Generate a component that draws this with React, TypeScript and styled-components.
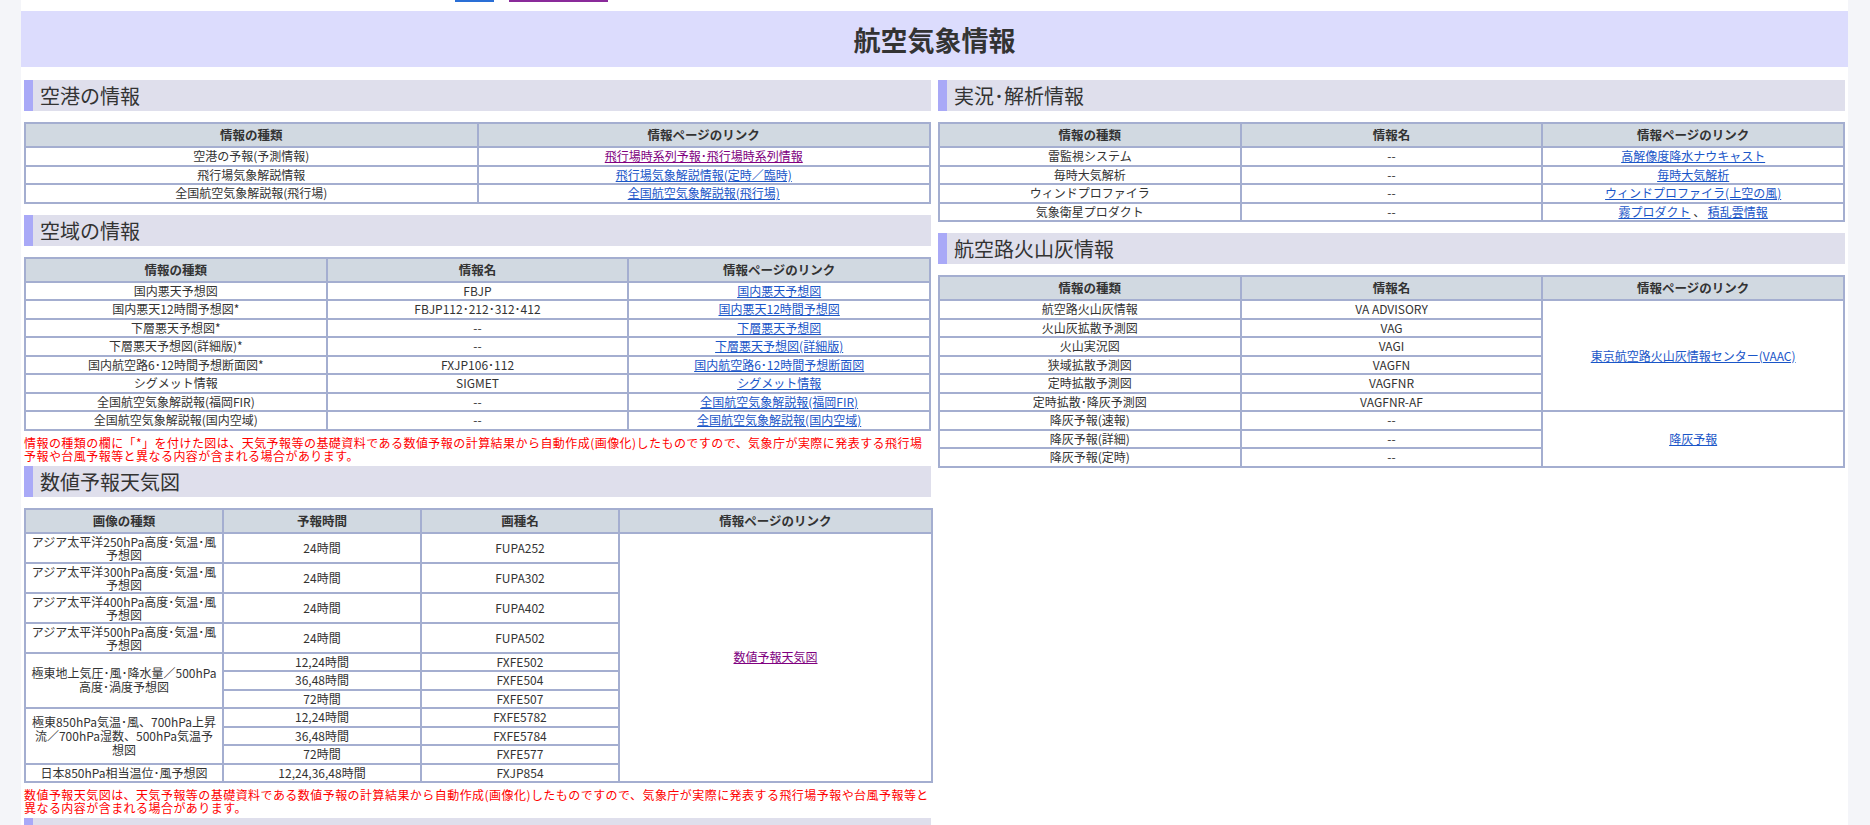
import React from "react";
import styled, { createGlobalStyle } from "styled-components";

const Global = createGlobalStyle`
  html, body { margin: 0; padding: 0; background: #f4f5f9; }
  body { font-family: "Noto Sans CJK JP", "Noto Sans", sans-serif; color: #333; }
`;

const Page = styled.div`
  margin-left: 21px;
  width: 1827px;
  background: #fff;
  min-height: 825px;
`;
const TopStrip = styled.div`
  display: flex;
  height: 11px;
  gap: 15px;
  padding-left: 434px;
`;
const TopBtn = styled.div<{ $c: string; $w: number }>`
  width: ${(p) => p.$w}px;
  height: 2px;
  background: ${(p) => p.$c};
`;
const Banner = styled.h1`
  margin: 0;
  height: 56px;
  background: #dcdcfd;
  display: flex;
  align-items: center;
  justify-content: center;
  font-size: 27px;
  font-weight: bold;
  color: #333;
`;
const Columns = styled.div`
  display: grid;
  grid-template-columns: 907px 907px;
  gap: 7px;
  padding: 0 3px;
  margin-top: 13px;
`;
const Col = styled.div`
  display: flex;
  flex-direction: column;
`;
const Heading = styled.h2`
  margin: 0 0 11px;
  height: 31px;
  box-sizing: border-box;
  background: #dfdfec;
  border-left: 9px solid #a9a9f7;
  padding-left: 7px;
  font-size: 20px;
  font-weight: normal;
  line-height: 31px;
  color: #333;
`;
const Table = styled.table`
  width: 100%;
  border-collapse: collapse;
  border: 2px solid #a4aed0;
  table-layout: fixed;
  font-size: 12px;
  margin-bottom: 11px;
  & th, & td {
    border: 2px solid #a4aed0;
    text-align: center;
    padding: 0 3px;
    line-height: 14px;
  }
  & th {
    background: #d1d9e1;
    height: 22px;
    font-weight: bold;
    font-size: 12.5px;
  }
  & td { height: 16.5px; }
`;
const ColW = styled.col<{ $w: number }>`
  width: ${(p) => p.$w}px;
`;
const TallTd = styled.td`
  height: 28px !important;
  line-height: 13px !important;
`;
const Link = styled.a<{ $v?: boolean }>`
  color: ${(p) => (p.$v ? "#800080" : "#1a56c8")};
  text-decoration: underline;
`;
const Note = styled.p`
  margin: -6px 0 4px;
  color: #f00;
  font-size: 12px;
  line-height: 13px;
  letter-spacing: 0.45px;
`;

const A = ({ t, v }: { t: string; v?: boolean }) => <Link href="#" $v={v}>{t}</Link>;

const sky: [string, string, string][] = [
  ["国内悪天予想図", "FBJP", "国内悪天予想図"],
  ["国内悪天12時間予想図*", "FBJP112･212･312･412", "国内悪天12時間予想図"],
  ["下層悪天予想図*", "--", "下層悪天予想図"],
  ["下層悪天予想図(詳細版)*", "--", "下層悪天予想図(詳細版)"],
  ["国内航空路6･12時間予想断面図*", "FXJP106･112", "国内航空路6･12時間予想断面図"],
  ["シグメット情報", "SIGMET", "シグメット情報"],
  ["全国航空気象解説報(福岡FIR)", "--", "全国航空気象解説報(福岡FIR)"],
  ["全国航空気象解説報(国内空域)", "--", "全国航空気象解説報(国内空域)"],
];

export default function App() {
  return (
    <>
      <Global />
      <Page>
        <TopStrip>
          <TopBtn $c="#2a6fd6" $w={39} />
          <TopBtn $c="#8a2a9a" $w={99} />
        </TopStrip>
        <Banner>航空気象情報</Banner>
        <Columns>
          <Col>
            <Heading>空港の情報</Heading>
            <Table>
              <thead><tr><th>情報の種類</th><th>情報ページのリンク</th></tr></thead>
              <tbody>
                <tr><td>空港の予報(予測情報)</td><td><A v t="飛行場時系列予報･飛行場時系列情報" /></td></tr>
                <tr><td>飛行場気象解説情報</td><td><A t="飛行場気象解説情報(定時／臨時)" /></td></tr>
                <tr><td>全国航空気象解説報(飛行場)</td><td><A t="全国航空気象解説報(飛行場)" /></td></tr>
              </tbody>
            </Table>
            <Heading>空域の情報</Heading>
            <Table>
              <thead><tr><th>情報の種類</th><th>情報名</th><th>情報ページのリンク</th></tr></thead>
              <tbody>
                {sky.map((r) => (
                  <tr key={r[0]}><td>{r[0]}</td><td>{r[1]}</td><td><A t={r[2]} /></td></tr>
                ))}
              </tbody>
            </Table>
            <Note>情報の種類の欄に「*」を付けた図は、天気予報等の基礎資料である数値予報の計算結果から自動作成(画像化)したものですので、気象庁が実際に発表する飛行場予報や台風予報等と異なる内容が含まれる場合があります。</Note>
            <Heading>数値予報天気図</Heading>
            <Table>
              <colgroup><ColW $w={198} /><ColW $w={198} /><ColW $w={198} /><ColW $w={313} /></colgroup>
              <thead><tr><th>画像の種類</th><th>予報時間</th><th>画種名</th><th>情報ページのリンク</th></tr></thead>
              <tbody>
                <tr><TallTd>アジア太平洋250hPa高度･気温･風予想図</TallTd><td>24時間</td><td>FUPA252</td><td rowSpan={11}><A v t="数値予報天気図" /></td></tr>
                <tr><TallTd>アジア太平洋300hPa高度･気温･風予想図</TallTd><td>24時間</td><td>FUPA302</td></tr>
                <tr><TallTd>アジア太平洋400hPa高度･気温･風予想図</TallTd><td>24時間</td><td>FUPA402</td></tr>
                <tr><TallTd>アジア太平洋500hPa高度･気温･風予想図</TallTd><td>24時間</td><td>FUPA502</td></tr>
                <tr><td rowSpan={3}>極東地上気圧･風･降水量／500hPa高度･渦度予想図</td><td>12,24時間</td><td>FXFE502</td></tr>
                <tr><td>36,48時間</td><td>FXFE504</td></tr>
                <tr><td>72時間</td><td>FXFE507</td></tr>
                <tr><td rowSpan={3}>極東850hPa気温･風、700hPa上昇流／700hPa湿数、500hPa気温予想図</td><td>12,24時間</td><td>FXFE5782</td></tr>
                <tr><td>36,48時間</td><td>FXFE5784</td></tr>
                <tr><td>72時間</td><td>FXFE577</td></tr>
                <tr><td>日本850hPa相当温位･風予想図</td><td>12,24,36,48時間</td><td>FXJP854</td></tr>
              </tbody>
            </Table>
            <Note>数値予報天気図は、天気予報等の基礎資料である数値予報の計算結果から自動作成(画像化)したものですので、気象庁が実際に発表する飛行場予報や台風予報等と異なる内容が含まれる場合があります。</Note>
            <Heading>&nbsp;</Heading>
          </Col>
          <Col>
            <Heading>実況･解析情報</Heading>
            <Table>
              <thead><tr><th>情報の種類</th><th>情報名</th><th>情報ページのリンク</th></tr></thead>
              <tbody>
                <tr><td>雷監視システム</td><td>--</td><td><A t="高解像度降水ナウキャスト" /></td></tr>
                <tr><td>毎時大気解析</td><td>--</td><td><A t="毎時大気解析" /></td></tr>
                <tr><td>ウィンドプロファイラ</td><td>--</td><td><A t="ウィンドプロファイラ(上空の風)" /></td></tr>
                <tr><td>気象衛星プロダクト</td><td>--</td><td><A t="霧プロダクト" /> 、 <A t="積乱雲情報" /></td></tr>
              </tbody>
            </Table>
            <Heading>航空路火山灰情報</Heading>
            <Table>
              <thead><tr><th>情報の種類</th><th>情報名</th><th>情報ページのリンク</th></tr></thead>
              <tbody>
                <tr><td>航空路火山灰情報</td><td>VA ADVISORY</td><td rowSpan={6}><A t="東京航空路火山灰情報センター(VAAC)" /></td></tr>
                <tr><td>火山灰拡散予測図</td><td>VAG</td></tr>
                <tr><td>火山実況図</td><td>VAGI</td></tr>
                <tr><td>狭域拡散予測図</td><td>VAGFN</td></tr>
                <tr><td>定時拡散予測図</td><td>VAGFNR</td></tr>
                <tr><td>定時拡散･降灰予測図</td><td>VAGFNR-AF</td></tr>
                <tr><td>降灰予報(速報)</td><td>--</td><td rowSpan={3}><A t="降灰予報" /></td></tr>
                <tr><td>降灰予報(詳細)</td><td>--</td></tr>
                <tr><td>降灰予報(定時)</td><td>--</td></tr>
              </tbody>
            </Table>
          </Col>
        </Columns>
      </Page>
    </>
  );
}
